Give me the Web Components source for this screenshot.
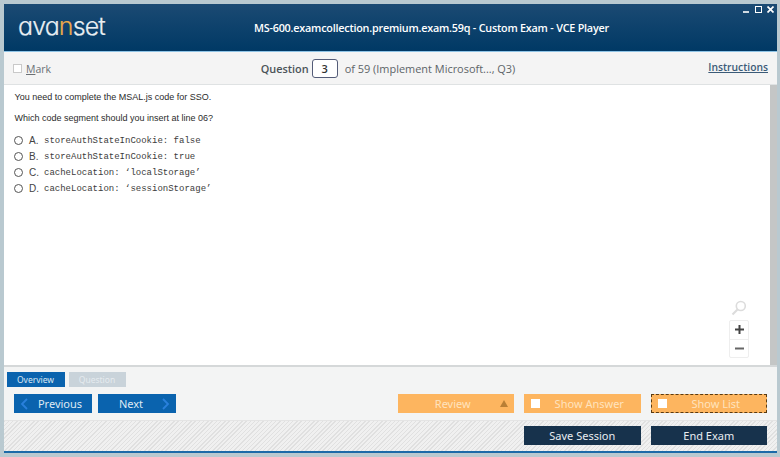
<!DOCTYPE html>
<html>
<head>
<meta charset="utf-8">
<title>VCE Player</title>
<style>
    html, body { margin: 0; height: 100%; overflow: hidden; }
    body { background: #b9c9d0; font-family: "Open Sans", sans-serif; }
    exam-app { margin: 4px 3px 0 4px; height: 449px; }
</style>
</head>
<body>
<exam-app>
    <exam-header slot="header" title="MS-600.examcollection.premium.exam.59q - Custom Exam - VCE Player"></exam-header>
    <exam-toolbar slot="toolbar" current="3" total="59" section="Implement Microsoft..., Q3"></exam-toolbar>
    <question-pane slot="pane">
        <p>You need to complete the MSAL.js code for SSO.</p>
        <p>Which code segment should you insert at line 06?</p>
        <answer-option letter="A">storeAuthStateInCookie: false</answer-option>
        <answer-option letter="B">storeAuthStateInCookie: true</answer-option>
        <answer-option letter="C">cacheLocation: ‘localStorage’</answer-option>
        <answer-option letter="D">cacheLocation: ‘sessionStorage’</answer-option>
    </question-pane>
    <exam-footer slot="footer"></exam-footer>
</exam-app>

<script>
class ExamApp extends HTMLElement {
    constructor() {
        super();
        this.attachShadow({ mode: 'open' });
        this.shadowRoot.innerHTML = `
            <style>
                :host { display: flex; flex-direction: column; overflow: hidden; }
                .middle { flex: 1; min-height: 0; display: flex; }
            </style>
            <slot name="header"></slot>
            <slot name="toolbar"></slot>
            <div class="middle"><slot name="pane"></slot></div>
            <slot name="footer"></slot>
        `;
    }
}

class ExamHeader extends HTMLElement {
    constructor() {
        super();
        this.attachShadow({ mode: 'open' });
        const title = this.getAttribute("title") || "";
        this.shadowRoot.innerHTML = `
            <style>
                :host {
                    display: flex;
                    position: relative;
                    align-items: center;
                    height: 47px;
                    background: linear-gradient(#1b4a73, #003965);
                    border-bottom: 1px solid #8fc4e6;
                    color: #fff;
                }
                #logo {
                    width: 212px;
                    padding: 0 0 3px 14px;
                    box-sizing: border-box;
                    font: 300 25px Inter, sans-serif;
                    font-feature-settings: "cv11" 1;
                    letter-spacing: -0.9px;
                    -webkit-text-stroke: 0.2px #e8eef2;
                    color: #e8eef2;
                }
                #logo span { color: #eba84a; -webkit-text-stroke: 0.2px #eba84a; }
                #title {
                    flex: 1;
                    margin-right: 130px;
                    padding-left: 38px;
                    font: 600 10.8px "Open Sans", sans-serif;
                    letter-spacing: -0.22px;
                    white-space: nowrap;
                }
                #controls {
                    position: absolute;
                    top: 2px;
                    right: 3px;
                    display: flex;
                    gap: 5px;
                }
                svg { width: 7px; height: 7px; display: block; fill: none; stroke: #fff; }
            </style>
            <div id="logo">ava<span>n</span>set</div>
            <div id="title">${title}</div>
            <div id="controls">
                <svg viewBox="0 0 7 7"><path d="M0 6H6" stroke-width="1.6"/></svg>
                <svg viewBox="0 0 7 7"><rect x=".5" y=".5" width="6" height="6"/></svg>
                <svg viewBox="0 0 7 7"><path d="M.5 .5L6.5 6.5M6.5 .5L.5 6.5" stroke-width="1.7"/></svg>
            </div>
        `;
    }
}

class ExamToolbar extends HTMLElement {
    constructor() {
        super();
        this.attachShadow({ mode: 'open' });
        const current = this.getAttribute("current");
        const total = this.getAttribute("total");
        const section = this.getAttribute("section");
        this.shadowRoot.innerHTML = `
            <style>
                :host {
                    display: grid;
                    grid-template-columns: 1fr auto 1fr;
                    align-items: center;
                    height: 32px;
                    padding: 0 9px;
                    background: #f4f4f4;
                    border-bottom: 1px solid #dfe2e3;
                    color: #5d6468;
                    font-size: 10.95px;
                }
                #mark { display: flex; align-items: center; gap: 4px; color: #6b7074; font-size: 10.5px; }
                #mark i { width: 7px; height: 7px; background: #fff; border: 1px solid #c9c9c9; }
                #mark u { text-decoration-thickness: 1px; }
                #mark div { margin-top: 1px; }
                #question { display: flex; align-items: center; margin-right: 5px; }
                b { color: #4b5358; font-weight: 600; font-size: 10.9px; }
                #num {
                    width: 24px;
                    height: 17px;
                    margin: 0 7px 0 3px;
                    border: 1px solid #545c78;
                    border-radius: 3px;
                    background: #fff;
                    color: #333;
                    font-weight: 600;
                    font-size: 11px;
                    line-height: 17px;
                    text-align: center;
                }
                a {
                    justify-self: end;
                    margin-bottom: 2px;
                    color: #3b5b78;
                    font-weight: 600;
                    font-size: 10.3px;
                    text-decoration: underline;
                }
            </style>
            <div id="mark"><i></i><div><u>M</u>ark</div></div>
            <div id="question"><b>Question</b><span id="num">${current}</span><span>of ${total} (${section})</span></div>
            <a href="#">Instructions</a>
        `;
    }
}

class QuestionPane extends HTMLElement {
    constructor() {
        super();
        this.attachShadow({ mode: 'open' });
        this.shadowRoot.innerHTML = `
            <style>
                :host {
                    display: block;
                    flex: 1;
                    position: relative;
                    background: #fff;
                    border-right: 7px solid #c4c6c6;
                    padding: 7px 0 0 10.5px;
                    font: 9px "Liberation Sans", sans-serif;
                    color: #2b2b2b;
                }
                ::slotted(p) { margin: 0 0 10px; line-height: 11px; }
                #zoom {
                    position: absolute;
                    right: 21px;
                    bottom: 7px;
                    display: flex;
                    flex-direction: column;
                    align-items: center;
                }
                #zoom svg { display: block; }
                #box {
                    width: 20px;
                    height: 38px;
                    margin-top: 4px;
                    border: 1px solid #eee;
                    border-radius: 2px;
                    display: flex;
                    flex-direction: column;
                    box-sizing: border-box;
                }
                #box div { flex: 1; display: flex; align-items: center; justify-content: center; }
                #box div + div { border-top: 1px solid #eee; }
            </style>
            <slot></slot>
            <div id="zoom">
                <svg width="16" height="16" viewBox="0 0 16 16" fill="none" stroke="#dcdcdc">
                    <circle cx="9.8" cy="6" r="4.5" stroke-width="1.6"/>
                    <path d="M6.5 9.5L1.5 14.5" stroke-width="2.2"/>
                </svg>
                <div id="box">
                    <div><svg width="9" height="9" viewBox="0 0 9 9"><path d="M0 4.5H9M4.5 0V9" stroke="#444" stroke-width="2"/></svg></div>
                    <div><svg width="9" height="9" viewBox="0 0 9 9"><path d="M0 4.5H9" stroke="#666" stroke-width="2"/></svg></div>
                </div>
            </div>
        `;
    }
}

class AnswerOption extends HTMLElement {
    constructor() {
        super();
        this.attachShadow({ mode: 'open' });
        const letter = this.getAttribute("letter");
        this.shadowRoot.innerHTML = `
            <style>
                :host {
                    display: flex;
                    align-items: center;
                    height: 16px;
                    margin-top: -2px;
                    margin-bottom: 2px;
                    color: #333;
                }
                i {
                    width: 7px;
                    height: 7px;
                    margin-left: -0.5px;
                    border: 1px solid #555;
                    border-radius: 50%;
                }
                span { width: 15px; margin-left: 6px; color: #444; font-size: 10px; }
                code { font: 9px "Liberation Mono", monospace; color: #3c3c3c; padding-top: 1px; }
            </style>
            <i></i><span>${letter}.</span><code><slot></slot></code>
        `;
    }
}

class ExamButton extends HTMLElement {
    constructor() {
        super();
        this.attachShadow({ mode: 'open' });
        const before = this.hasAttribute("arrow-left") ? '<svg class="arrow left" viewBox="0 0 8 12"><path d="M7 1L2 6L7 11"/></svg>' : '';
        const after = this.hasAttribute("arrow-right") ? '<svg class="arrow right" viewBox="0 0 8 12"><path d="M1 1L6 6L1 11"/></svg>' : '';
        const check = this.hasAttribute("check") ? '<i></i>' : '';
        const tri = this.hasAttribute("flag") ? '<svg class="flag" viewBox="0 0 8 7"><path d="M4 0L8 7H0Z"/></svg>' : '';
        this.shadowRoot.innerHTML = `
            <style>
                :host {
                    display: flex;
                    position: relative;
                    align-items: center;
                    justify-content: center;
                    box-sizing: border-box;
                    height: 19px;
                    font: 11px "Noto Sans", sans-serif;
                }
                :host([kind="blue"]) { width: 78px; background: #0a63ae; color: #dfe9f3; }
                :host([kind="orange"]) { width: 116.5px; background: #fdb55f; color: #ffe3be; }
                :host([kind="dark"]) { width: 116.5px; background: #17324c; color: #e9edf1; }
                :host([dotted]) { outline: 1px dashed #5a3a10; outline-offset: -1px; }
                :host([arrow-left]), :host([check]) { padding-left: 14px; }
                :host([arrow-right]) { padding-right: 12px; }
                :host([flag]) { padding-right: 6px; }
                .arrow { position: absolute; width: 8px; height: 12px; fill: none; stroke: #2a80dc; stroke-width: 1.8; }
                .left { left: 6px; }
                .right { right: 6px; }
                .flag { position: absolute; right: 6px; width: 8px; height: 7px; fill: #b97f35; }
                i { position: absolute; left: 7px; width: 9px; height: 9px; background: #fff; }
            </style>
            ${before}${check}<slot></slot>${after}${tri}
        `;
    }
}

class ExamFooter extends HTMLElement {
    constructor() {
        super();
        this.attachShadow({ mode: 'open' });
        this.shadowRoot.innerHTML = `
            <style>
                :host {
                    display: block;
                    background: #f3f4f4;
                    border-top: 2px solid #d5d8d9;
                    font-family: "Noto Sans", sans-serif;
                }
                #tabs { display: flex; gap: 4px; padding: 5px 0 0 2.5px; }
                #tabs div {
                    width: 57px;
                    height: 15px;
                    font-size: 8.5px;
                    line-height: 15px;
                    text-align: center;
                }
                #tabs .on { width: 58px; background: #0a63ae; color: #dce8f3; }
                #tabs .off { background: #c9d3da; color: #e6ebef; }
                #nav {
                    display: flex;
                    align-items: center;
                    height: 19px;
                    padding: 7px 10px;
                    gap: 6px;
                    border-bottom: 1px solid #e4e4e4;
                }
                #nav .space { flex: 1; }
                #nav .pair { display: flex; gap: 10px; }
                #end {
                    display: flex;
                    justify-content: flex-end;
                    gap: 10px;
                    padding: 5px 10px 6px;
                    background: repeating-linear-gradient(135deg, #e0e0e0 0 1px, #f0f0f0 1px 3px);
                }
                #line { height: 2px; background: #1c6aa8; }
            </style>
            <div id="tabs"><div class="on">Overview</div><div class="off">Question</div></div>
            <div id="nav">
                <exam-button kind="blue" arrow-left>Previous</exam-button>
                <exam-button kind="blue" arrow-right>Next</exam-button>
                <div class="space"></div>
                <div class="pair">
                    <exam-button kind="orange" flag>Review</exam-button>
                    <exam-button kind="orange" check>Show Answer</exam-button>
                    <exam-button kind="orange" check dotted>Show List</exam-button>
                </div>
            </div>
            <div id="end">
                <exam-button kind="dark">Save Session</exam-button>
                <exam-button kind="dark">End Exam</exam-button>
            </div>
            <div id="line"></div>
        `;
    }
}

customElements.define('exam-app', ExamApp);
customElements.define('exam-header', ExamHeader);
customElements.define('exam-toolbar', ExamToolbar);
customElements.define('question-pane', QuestionPane);
customElements.define('answer-option', AnswerOption);
customElements.define('exam-button', ExamButton);
customElements.define('exam-footer', ExamFooter);
</script>
</body>
</html>
